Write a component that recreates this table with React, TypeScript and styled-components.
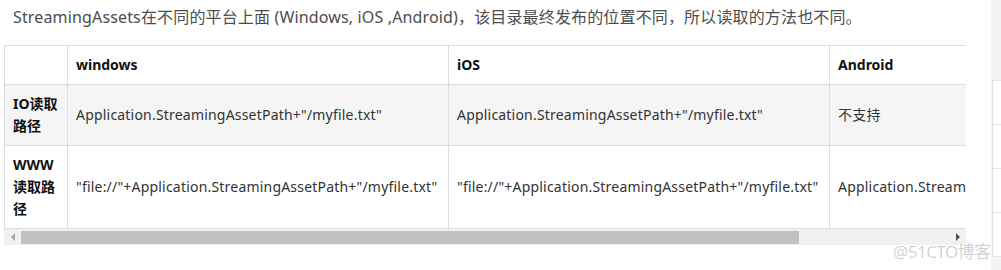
import React from "react";
import styled, { createGlobalStyle } from "styled-components";

const GlobalStyle = createGlobalStyle`
  html, body {
    margin: 0;
    padding: 0;
    background: #fff;
  }
  body {
    font-family: "Noto Sans", "Noto Sans CJK SC", sans-serif;
  }
`;

const Page = styled.div`
  position: relative;
  display: flex;
  flex-direction: row;
  width: 1001px;
  height: 270px;
  overflow: hidden;
`;

const Main = styled.div`
  flex: 0 0 991px;
  padding: 5px 0 0 4px;
  box-sizing: border-box;
`;

const Intro = styled.p`
  margin: 0 0 16px;
  padding-left: 9px;
  font-size: 16px;
  line-height: 24px;
  letter-spacing: 0.15px;
  color: #4d4d4d;
  white-space: nowrap;
`;

const TableViewport = styled.div`
  width: 962px;
  overflow: hidden;
`;

const Table = styled.table`
  border-collapse: separate;
  border-spacing: 0;
  table-layout: fixed;
  width: 1148px;
  border-top: 1px solid #dddddd;
  border-left: 1px solid #dddddd;
  font-size: 14px;
  line-height: 22px;
`;

const Row = styled.tr<{ shaded?: boolean }>`
  background: ${({ shaded }) => (shaded ? "#f5f5f5" : "#ffffff")};
`;

const HeadCell = styled.th<{ w: number }>`
  box-sizing: border-box;
  width: ${({ w }) => w}px;
  padding: 8px;
  border-right: 1px solid #dddddd;
  border-bottom: 1px solid #dddddd;
  text-align: left;
  font-weight: 700;
  color: #111111;
  white-space: nowrap;
`;

const Cell = styled.td<{ label?: boolean }>`
  box-sizing: border-box;
  padding: 8px;
  border-right: 1px solid #dddddd;
  border-bottom: 1px solid #dddddd;
  vertical-align: middle;
  font-weight: ${({ label }) => (label ? 700 : 400)};
  color: ${({ label }) => (label ? "#111111" : "#333333")};
  letter-spacing: ${({ label }) => (label ? "0" : "0.2px")};
  white-space: ${({ label }) => (label ? "normal" : "nowrap")};
  overflow: hidden;
  word-break: break-all;
`;

const ScrollTrack = styled.div`
  display: flex;
  align-items: center;
  width: 962px;
  height: 16px;
  background: #f1f1f1;
`;

const ArrowButton = styled.div<{ dir: "left" | "right"; active?: boolean }>`
  flex: 0 0 17px;
  height: 16px;
  display: flex;
  align-items: center;
  justify-content: center;
  &::before {
    content: "";
    width: 0;
    height: 0;
    border-top: 4px solid transparent;
    border-bottom: 4px solid transparent;
    ${({ dir, active }) =>
      dir === "left"
        ? `border-right: 4px solid ${active ? "#505050" : "#a3a3a3"};`
        : `border-left: 4px solid ${active ? "#505050" : "#a3a3a3"};`}
  }
`;

const Thumb = styled.div`
  height: 13px;
  background: #c1c1c1;
`;

const TrackRest = styled.div`
  flex: 1;
`;

const Sidebar = styled.aside`
  flex: 1;
  background: #f4f4f4;
  padding: 80px 0 0 1px;
`;

const SideCard = styled.div`
  background: #fff;
  border-left: 1px solid #e2e2e2;
  border-top: 1px solid #e6e6e6;
`;

const SideItem = styled.div`
  height: 43px;
  border-bottom: 1px solid #e6e6e6;
`;

const Watermark = styled.div`
  position: absolute;
  left: 893px;
  top: 240px;
  font-size: 17px;
  line-height: 24px;
  letter-spacing: -0.5px;
  color: rgba(0, 0, 0, 0.2);
  white-space: nowrap;
  pointer-events: none;
`;

const columns = [
  { title: "", width: 63 },
  { title: "windows", width: 381 },
  { title: "iOS", width: 381 },
  { title: "Android", width: 323 },
];

const rows = [
  {
    label: "IO读取路径",
    cells: [
      'Application.StreamingAssetPath+"/myfile.txt"',
      'Application.StreamingAssetPath+"/myfile.txt"',
      "不支持",
    ],
  },
  {
    label: "WWW读取路径",
    cells: [
      '"file://"+Application.StreamingAssetPath+"/myfile.txt"',
      '"file://"+Application.StreamingAssetPath+"/myfile.txt"',
      'Application.StreamingAssetPath+"/myfile.txt"',
    ],
  },
];

const visibleWidth = 962;
const contentWidth = 1148;
const thumbWidth = Math.round((visibleWidth - 34) * (visibleWidth / contentWidth));

export default function App() {
  return (
    <>
      <GlobalStyle />
      <Page>
        <Main>
          <Intro>
            StreamingAssets在不同的平台上面 (Windows, iOS ,Android)，该目录最终发布的位置不同，所以读取的方法也不同。
          </Intro>
          <TableViewport>
            <Table>
              <thead>
                <Row>
                  {columns.map((c) => (
                    <HeadCell key={c.title || "blank"} w={c.width}>
                      {c.title}
                    </HeadCell>
                  ))}
                </Row>
              </thead>
              <tbody>
                {rows.map((r, i) => (
                  <Row key={r.label} shaded={i % 2 === 0}>
                    <Cell label>{r.label}</Cell>
                    {r.cells.map((text, j) => (
                      <Cell key={j}>{text}</Cell>
                    ))}
                  </Row>
                ))}
              </tbody>
            </Table>
          </TableViewport>
          <ScrollTrack>
            <ArrowButton dir="left" />
            <Thumb style={{ width: thumbWidth }} />
            <TrackRest />
            <ArrowButton dir="right" active />
          </ScrollTrack>
        </Main>
        <Sidebar>
          <SideCard>
            <SideItem />
            <SideItem />
            <SideItem />
            <SideItem />
          </SideCard>
        </Sidebar>
        <Watermark>@51CTO博客</Watermark>
      </Page>
    </>
  );
}
